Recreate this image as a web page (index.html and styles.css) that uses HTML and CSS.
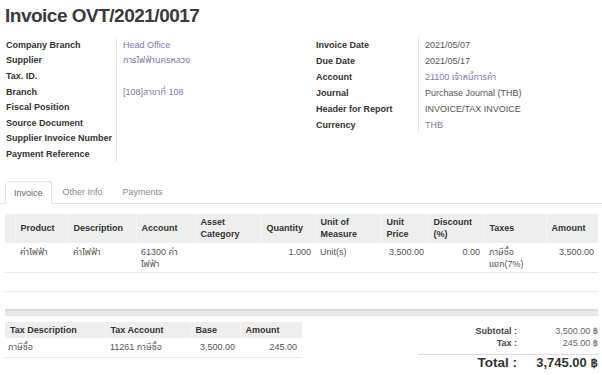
FILE: index.html
```html
<!DOCTYPE html>
<html lang="th">
<head>
    <meta charset="UTF-8">
    <meta name="viewport" content="width=device-width, initial-scale=1.0">
    <title>Invoice OVT/2021/0017</title>
    <link rel="stylesheet" href="styles.css">
</head>
<body>
    <div class="sheet">
        <h1 class="title">Invoice OVT/2021/0017</h1>

        <div class="fields">
            <div class="group group-left">
                <div class="label">Company Branch</div><div class="value link">Head Office</div>
                <div class="label">Supplier</div><div class="value link">การไฟฟ้านครหลวง</div>
                <div class="label">Tax. ID.</div><div class="value"></div>
                <div class="label">Branch</div><div class="value link">[108]สาขาที่ 108</div>
                <div class="label">Fiscal Position</div><div class="value"></div>
                <div class="label">Source Document</div><div class="value"></div>
                <div class="label">Supplier Invoice Number</div><div class="value"></div>
                <div class="label">Payment Reference</div><div class="value"></div>
            </div>
            <div class="group group-right">
                <div class="label">Invoice Date</div><div class="value">2021/05/07</div>
                <div class="label">Due Date</div><div class="value">2021/05/17</div>
                <div class="label">Account</div><div class="value link">21100 เจ้าหนี้การค้า</div>
                <div class="label">Journal</div><div class="value">Purchase Journal (THB)</div>
                <div class="label">Header for Report</div><div class="value">INVOICE/TAX INVOICE</div>
                <div class="label">Currency</div><div class="value link">THB</div>
            </div>
        </div>

        <ul class="tabs">
            <li class="tab active">Invoice</li>
            <li class="tab">Other Info</li>
            <li class="tab">Payments</li>
        </ul>

        <table class="grid lines">
            <colgroup>
                <col style="width: 10px">
                <col style="width: 53px">
                <col style="width: 68px">
                <col style="width: 59px">
                <col style="width: 66px">
                <col style="width: 54px">
                <col style="width: 66px">
                <col style="width: 47px">
                <col style="width: 56px">
                <col style="width: 62px">
                <col style="width: 52px">
            </colgroup>
            <thead>
                <tr>
                    <th></th>
                    <th>Product</th>
                    <th>Description</th>
                    <th>Account</th>
                    <th>Asset Category</th>
                    <th>Quantity</th>
                    <th>Unit of Measure</th>
                    <th>Unit Price</th>
                    <th>Discount (%)</th>
                    <th>Taxes</th>
                    <th>Amount</th>
                </tr>
            </thead>
            <tbody>
                <tr>
                    <td></td>
                    <td>ค่าไฟฟ้า</td>
                    <td>ค่าไฟฟ้า</td>
                    <td>61300 ค่าไฟฟ้า</td>
                    <td></td>
                    <td class="num">1.000</td>
                    <td>Unit(s)</td>
                    <td class="num">3,500.00</td>
                    <td class="num">0.00</td>
                    <td>ภาษีซื้อแยก(7%)</td>
                    <td class="num">3,500.00</td>
                </tr>
                <tr class="empty">
                    <td colspan="11"></td>
                </tr>
            </tbody>
        </table>

        <div class="bar"></div>

        <div class="footer">
            <table class="grid taxes">
                <colgroup>
                    <col style="width: 100px">
                    <col style="width: 85px">
                    <col style="width: 50px">
                    <col style="width: 62px">
                </colgroup>
                <thead>
                    <tr>
                        <th>Tax Description</th>
                        <th>Tax Account</th>
                        <th>Base</th>
                        <th>Amount</th>
                    </tr>
                </thead>
                <tbody>
                    <tr>
                        <td>ภาษีซื้อ</td>
                        <td>11261 ภาษีซื้อ</td>
                        <td class="num">3,500.00</td>
                        <td class="num">245.00</td>
                    </tr>
                </tbody>
            </table>

            <div class="totals">
                <div class="total-label">Subtotal :</div><div class="total-value">3,500.00 ฿</div>
                <div class="total-label last">Tax :</div><div class="total-value last">245.00 ฿</div>
                <div class="total-label grand">Total :</div><div class="total-value grand">3,745.00 ฿</div>
            </div>
        </div>
    </div>
</body>
</html>
```

FILE: styles.css
```css
* {
    margin: 0;
    padding: 0;
    box-sizing: border-box;
}

:root {
    --text: #555555;
    --text-strong: #333333;
    --link: #7c7bad;
    --border: #e4e4e4;
    --head-bg: #eeeeee;
}

body {
    font-family: "Liberation Sans", Arial, "Noto Sans Thai", "DejaVu Sans", sans-serif;
    font-size: 9px;
    color: var(--text);
    background: #ffffff;
}

.sheet {
    width: 602px;
    padding: 0 4px 0 5px;
}

.title {
    margin-top: 5px;
    margin-bottom: 10px;
    font-size: 19px;
    line-height: 22px;
    font-weight: 700;
    letter-spacing: -0.5px;
    color: #3a3a3a;
}

/* header fields */
.fields {
    display: flex;
    padding-left: 1px;
}

.group {
    display: grid;
    align-content: start;
}

.group-left {
    width: 310px;
    grid-template-columns: 110px 1fr;
    grid-auto-rows: 15.6px;
}

.group-right {
    flex: 1;
    grid-template-columns: 102px 1fr;
    grid-auto-rows: 16px;
}

.label {
    font-weight: 700;
    color: var(--text-strong);
    display: flex;
    align-items: center;
    white-space: nowrap;
}

.value {
    border-left: 1px solid #e6e6e6;
    padding-left: 6px;
    display: flex;
    align-items: center;
    white-space: nowrap;
}

.link {
    color: var(--link);
}

/* notebook tabs */
.tabs {
    list-style: none;
    display: flex;
    gap: 2px;
    margin: 19px -4px 10px -5px;
    padding-left: 5px;
    border-bottom: 1px solid var(--border);
}

.tab {
    padding: 0 8px;
    line-height: 21px;
    border: 1px solid transparent;
    border-bottom: none;
    border-radius: 3px 3px 0 0;
    color: #8a8a8a;
}

.tab.active {
    border-color: var(--border);
    background: #ffffff;
    margin-bottom: -1px;
    line-height: 22px;
    color: #666666;
}

/* list tables */
.grid {
    border-collapse: collapse;
    table-layout: fixed;
}

.grid th {
    background: var(--head-bg);
    color: var(--text-strong);
    font-weight: 700;
    text-align: left;
    vertical-align: middle;
    border-left: 1px solid #f7f7f7;
}

.grid th:first-child {
    border-left: none;
}

.grid td {
    vertical-align: top;
    border-bottom: 1px solid #e8e8e8;
}

.grid .num {
    text-align: right;
}

.lines {
    width: 593px;
}

.lines th {
    padding: 2px 5px 3px;
    line-height: 12px;
}

.lines td {
    padding: 3px 4px 2px 5px;
    line-height: 12px;
}

.lines .empty td {
    height: 19px;
    padding: 0;
}

.bar {
    height: 7px;
    margin: 17px 0 6px;
    border-top: 2px solid #d9d9d9;
    border-bottom: 1px solid #e2e2e2;
    background: #ebebeb;
}

/* footer */
.footer {
    display: flex;
    justify-content: space-between;
    align-items: flex-start;
}

.taxes {
    width: 297px;
}

.taxes th {
    padding: 2px 5px;
    line-height: 12px;
}

.taxes td {
    padding: 4px 5px;
    line-height: 11px;
}

.taxes td:first-child {
    padding-left: 3px;
}

.totals {
    width: 180px;
    margin-top: 3px;
    display: grid;
    grid-template-columns: 99px 1fr;
}

.total-label {
    text-align: right;
    font-weight: 700;
    color: #444444;
    line-height: 12px;
}

.total-value {
    text-align: right;
    color: #666666;
    line-height: 12px;
}

.totals .last {
    padding-bottom: 5px;
    border-bottom: 1px solid #dddddd;
}

.totals .grand {
    font-size: 13px;
    line-height: 16px;
    font-weight: 700;
    color: #333333;
}

.total-label.grand {
    font-size: 13.5px;
}
```
